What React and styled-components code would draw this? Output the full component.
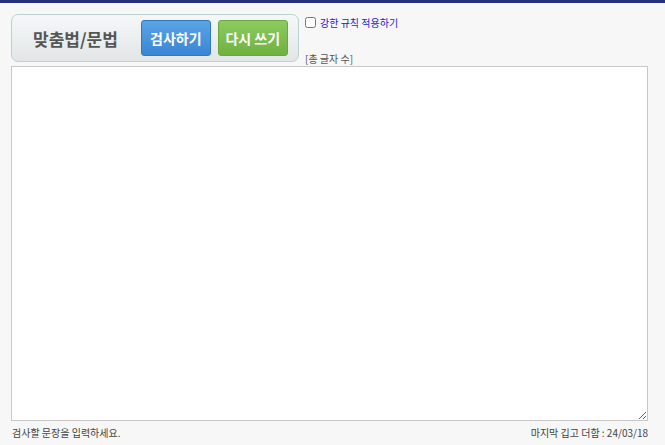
import React from "react";
import styled, { createGlobalStyle } from "styled-components";

const Global = createGlobalStyle`
  body { margin: 0; background: #f7f7f7; font-family: "Noto Sans CJK KR", "Liberation Sans", sans-serif; }
`;

const TopLine = styled.div`
  height: 3px;
  background: #26307a;
`;
const Page = styled.div`
  padding: 10px 17px 0 11px;
`;
const Head = styled.div`
  display: flex;
  gap: 6px;
  height: 52px;
`;
const Panel = styled.div`
  box-sizing: border-box;
  margin-top: 1px;
  width: 288px;
  height: 48px;
  border: 1px solid #b9d2d2;
  border-radius: 7px;
  background: linear-gradient(#f6f8f8, #e2e6e6);
  display: flex;
  align-items: center;
  padding: 0 10px 0 21px;
`;
const Title = styled.div`
  font-size: 17px;
  font-weight: bold;
  color: #555;
  width: 109px;
`;
const Btn = styled.div`
  box-sizing: border-box;
  width: ${(p) => (p.green ? 71 : 70)}px;
  height: 36px;
  margin-left: ${(p) => (p.green ? 7 : 0)}px;
  border-radius: 3px;
  border: 1px solid ${(p) => (p.green ? "#6aa83f" : "#2f78c4")};
  background: ${(p) =>
    p.green ? "linear-gradient(#8ccb5e, #6fb141)" : "linear-gradient(#5aa3e6, #3a86d4)"};
  color: #fff;
  font-size: 14px;
  font-weight: bold;
  display: flex;
  align-items: center;
  justify-content: center;
`;
const Side = styled.div`
  display: flex;
  flex-direction: column;
  justify-content: space-between;
  font-size: 10px;
  padding-top: 2px;
`;
const Check = styled.label`
  display: flex;
  align-items: center;
  gap: 4px;
  color: #1a1ad6;
  input { margin: 0; width: 11px; height: 11px; }
`;
const Count = styled.div`
  color: #555;
  margin-bottom: -1px;
`;
const Area = styled.textarea`
  display: block;
  box-sizing: border-box;
  width: 637px;
  height: 355px;
  margin-top: 1px;
  border: 1px solid #c8c8c8;
  background: #fff;
`;
const Foot = styled.div`
  display: flex;
  justify-content: space-between;
  font-size: 10px;
  color: #444;
  padding: 4px 0 0 1px;
`;

export default function App() {
  return (
    <>
      <Global />
      <TopLine />
      <Page>
        <Head>
          <Panel>
            <Title>맞춤법/문법</Title>
            <Btn>검사하기</Btn>
            <Btn green>다시 쓰기</Btn>
          </Panel>
          <Side>
            <Check><input type="checkbox" /> 강한 규칙 적용하기</Check>
            <Count>[총 글자 수]</Count>
          </Side>
        </Head>
        <Area />
        <Foot>
          <span>검사할 문장을 입력하세요.</span>
          <span>마지막 깁고 더함 : 24/03/18</span>
        </Foot>
      </Page>
    </>
  );
}
